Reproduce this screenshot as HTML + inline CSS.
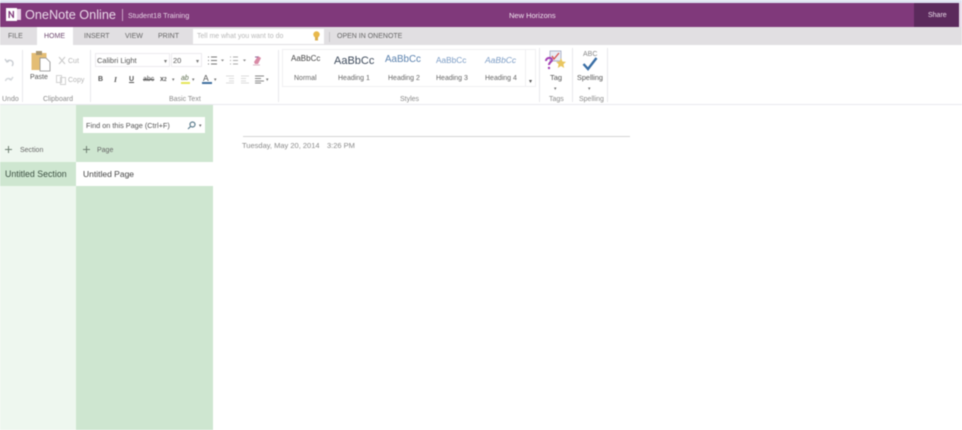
<!DOCTYPE html>
<html><head><meta charset="utf-8">
<style>
html,body{margin:0;padding:0;background:#fff}
#r{position:relative;width:962px;height:430px;overflow:hidden;background:#fff;font-family:"Liberation Sans",sans-serif;filter:blur(.45px)}
#r div,#r span.t{position:absolute;white-space:nowrap}
.t{position:absolute;white-space:nowrap;line-height:12px}
.g{font-size:7px;color:#8a8a8a}
.rb{font-size:7px;color:#666}
.sep{width:1px;background:#e9e9ec}
svg{position:absolute;overflow:visible}
</style></head><body>
<div id="r">
<div style="left:0;top:0;width:962px;height:3px;background:#dfe4f2"></div>
<div style="left:0;top:3px;width:962px;height:24px;background:#80397b"></div>
<div style="left:914px;top:3px;width:45px;height:25px;background:#5b2a5c"></div>
<div style="left:959px;top:3px;width:3px;height:24px;background:#e8dcea"></div>
<div style="left:0;top:27px;width:962px;height:18px;background:#e1dfe2"></div>
<div style="left:37px;top:27px;width:36px;height:18px;background:#fff"></div>

<svg style="left:6px;top:7px" width="16" height="16" viewBox="0 0 16 16"><rect x="0" y="1" width="11" height="13" fill="#fff"/><rect x="11" y="2" width="4" height="11" fill="#e7d3e6"/><path d="M2.5 11V4h1.2l3 4.600V4H8v7H6.900L3.800 6.300V11z" fill="#80397b"/></svg>
<span class="t" style="left:25px;top:7px;font-size:12.700px;line-height:17px;color:#e9d8e8">OneNote Online</span>
<div style="left:122px;top:9px;width:1px;height:12px;background:#c9a5c7"></div>
<span class="t" style="left:128px;top:10px;font-size:7.300px;color:#e6d3e5">Student18 Training</span>
<span class="t" style="left:509px;top:10px;font-size:7.500px;color:#f0e4ef">New Horizons</span>
<span class="t" style="left:928px;top:10px;font-size:7px;color:#eadcea">Share</span>

<span class="t" style="left:8px;top:31px;font-size:7px;color:#666">FILE</span>
<span class="t" style="left:44px;top:31px;font-size:7px;color:#6f4a70">HOME</span>
<span class="t" style="left:84px;top:31px;font-size:7px;color:#666">INSERT</span>
<span class="t" style="left:125px;top:31px;font-size:7px;color:#666">VIEW</span>
<span class="t" style="left:158px;top:31px;font-size:7px;color:#666">PRINT</span>
<div style="left:193px;top:29px;width:131px;height:15px;background:#fff"></div>
<span class="t" style="left:197px;top:31px;font-size:7px;color:#b8b8b8">Tell me what you want to do</span>
<svg style="left:312px;top:31px" width="9" height="11" viewBox="0 0 9 11"><circle cx="4.500" cy="3.500" r="3.200" fill="#e8b84a"/><rect x="3" y="6" width="3" height="3.500" fill="#d9ad4e"/></svg>
<div style="left:329px;top:32px;width:1px;height:10px;background:#c8c6c9"></div>
<span class="t" style="left:337px;top:31px;font-size:7px;color:#666">OPEN IN ONENOTE</span>

<div class="sep" style="left:22px;top:50px;height:52px"></div>
<div class="sep" style="left:90px;top:50px;height:52px"></div>
<div class="sep" style="left:278px;top:50px;height:52px"></div>
<div class="sep" style="left:539px;top:48px;height:54px"></div>
<div class="sep" style="left:572px;top:48px;height:54px"></div>
<div class="sep" style="left:607px;top:48px;height:54px"></div>
<div style="left:0;top:104px;width:962px;height:1px;background:#e8e8ee"></div>

<svg style="left:4px;top:56px" width="10" height="30" viewBox="0 0 10 30" fill="none" stroke="#c9cdd2" stroke-width="1.400"><path d="M1 3l2 3 2-1M3 5.500c2-2.500 6-1 6 2 0 1-.5 2-1 2.500"/><path d="M9 21l-2 3-2-1M7 23.500c-2-2-5-1-5.500 1.500" stroke="#d4d7db"/></svg>

<svg style="left:31px;top:50px" width="20" height="21" viewBox="0 0 20 21"><rect x="0.500" y="3" width="15" height="17" fill="#e4bd74"/><rect x="5" y="1" width="6" height="4" fill="#a8956f"/><path d="M9 8h6l4 4v9H9z" fill="#fff" stroke="#8d8d8d" stroke-width=".8"/></svg>
<span class="t" style="left:30px;top:72px;font-size:7px;color:#555">Paste</span>
<svg style="left:58px;top:56px" width="9" height="9" viewBox="0 0 9 9" fill="none" stroke="#c9c9c9"><path d="M1 1l6 7M7 1L1 8"/></svg>
<span class="t" style="left:68px;top:56px;font-size:7px;color:#b5b5b5">Cut</span>
<svg style="left:56px;top:75px" width="11" height="10" viewBox="0 0 11 10" fill="none" stroke="#d2d2d2"><rect x=".5" y=".5" width="5" height="7"/><rect x="4.500" y="2.500" width="5" height="7"/></svg>
<span class="t" style="left:68px;top:75px;font-size:7px;color:#b5b5b5">Copy</span>

<div style="left:95px;top:53px;width:75px;height:14px;border:1px solid #eceaee;box-sizing:border-box"></div>
<span class="t" style="left:97px;top:55px;font-size:7.500px;color:#555">Calibri Light</span>
<span class="t" style="left:164px;top:56px;font-size:6px;color:#777">▾</span>
<div style="left:171px;top:53px;width:31px;height:14px;border:1px solid #eceaee;box-sizing:border-box"></div>
<span class="t" style="left:173px;top:55px;font-size:7.500px;color:#555">20</span>
<span class="t" style="left:196px;top:56px;font-size:6px;color:#777">▾</span>

<svg style="left:207px;top:56px" width="52" height="10" viewBox="0 0 52 10"><g stroke="#777" fill="none"><path d="M1 1h1M1 4.500h1M1 8h1M4 1h6M4 4.500h6M4 8h6"/><path d="M23 1h1M23 4.500h1M23 8h1M26 1h5M26 4.500h5M26 8h5" stroke="#a9a9a9"/></g><path d="M14 3.500h3l-1.500 2z" fill="#888"/><path d="M36 3.500h3l-1.500 2z" fill="#888"/></svg>
<svg style="left:252px;top:55px" width="10" height="11" viewBox="0 0 10 11"><path d="M2 7l4-6 3 2-3 6H3z" fill="#d98aa6"/><path d="M1 10h7" stroke="#d9b7c5"/><path d="M3 2h3" stroke="#8a6a9a"/></svg>

<span class="t" style="left:98px;top:74px;font-size:7px;font-weight:bold;color:#555">B</span>
<span class="t" style="left:114px;top:74px;font-size:7.500px;font-style:italic;font-family:'Liberation Serif',serif;font-weight:bold;color:#555">I</span>
<span class="t" style="left:129px;top:74px;font-size:7px;font-weight:bold;text-decoration:underline;color:#555">U</span>
<span class="t" style="left:143px;top:74px;font-size:7px;text-decoration:line-through;color:#555">abc</span>
<span class="t" style="left:160px;top:74px;font-size:7px;font-weight:bold;color:#555">x<span style="font-size:5px">2</span></span>
<span class="t" style="left:172px;top:74px;font-size:5px;color:#777">▾</span>
<span class="t" style="left:181px;top:73px;font-size:7px;font-style:italic;color:#5a6a4a">ab</span>
<div style="left:181px;top:82px;width:9px;height:2px;background:#e6e65a"></div>
<span class="t" style="left:192px;top:74px;font-size:5px;color:#777">▾</span>
<span class="t" style="left:203px;top:72px;font-size:8.500px;color:#555">A</span>
<div style="left:202px;top:82px;width:10px;height:2px;background:#3f6f9f"></div>
<span class="t" style="left:214px;top:74px;font-size:5px;color:#777">▾</span>
<svg style="left:225px;top:75px" width="48" height="9" viewBox="0 0 48 9" fill="none" stroke="#dcdcdc"><path d="M1 1h8M4 3.500h5M4 6h5M1 8h8M16 1h8M16 3.500h5M16 6h5M16 8h8"/><path d="M30 1h9M30 3.500h6M30 6h9M30 8h6" stroke="#888"/></svg>
<span class="t" style="left:266px;top:74px;font-size:5px;color:#777">▾</span>

<div style="left:282px;top:49px;width:244px;height:38px;border:1px solid #f0eff2;box-sizing:border-box"></div>
<div style="left:525px;top:49px;width:11px;height:38px;border:1px solid #f0eff2;box-sizing:border-box"></div>
<span class="t" style="left:529px;top:76px;font-size:6px;color:#555">▾</span>
<span class="t" style="left:291px;top:53px;font-size:8px;color:#444">AaBbCc</span>
<span class="t" style="left:334px;top:54px;font-size:11px;line-height:14px;color:#3f4c5d">AaBbCc</span>
<span class="t" style="left:385px;top:53px;font-size:9.800px;line-height:14px;color:#5b82ae">AaBbCc</span>
<span class="t" style="left:436px;top:54px;font-size:8.300px;color:#7b9cc5">AaBbCc</span>
<span class="t" style="left:485px;top:54px;font-size:8.500px;font-style:italic;color:#7b9cc5">AaBbCc</span>
<span class="t rb" style="left:294px;top:73px">Normal</span>
<span class="t rb" style="left:338px;top:73px">Heading 1</span>
<span class="t rb" style="left:388px;top:73px">Heading 2</span>
<span class="t rb" style="left:436px;top:73px">Heading 3</span>
<span class="t rb" style="left:485px;top:73px">Heading 4</span>

<svg style="left:545px;top:50px" width="22" height="20" viewBox="0 0 22 20"><rect x="5" y="1" width="11" height="10" fill="#e8ecf4" stroke="#9fa7c0" stroke-width=".8"/><path d="M7 6l2 3 5-6" stroke="#d9534f" stroke-width="1.300" fill="none"/><path d="M1 11c0-4 6-4 6-1 0 2-3 2-3 5" stroke="#a43fb5" stroke-width="2" fill="none"/><circle cx="4" cy="18" r="1.200" fill="#a43fb5"/><path d="M16 8l1.500 3.500 3.500.4-2.600 2.400.8 3.700-3.200-2-3.200 2 .8-3.700-2.600-2.400 3.500-.4z" fill="#e9c65f"/></svg>
<span class="t" style="left:550px;top:72px;font-size:7.500px;color:#555">Tag</span>
<span class="t" style="left:554px;top:83px;font-size:5px;color:#777">▾</span>
<span class="t" style="left:583px;top:49px;font-size:7px;color:#888">ABC</span>
<svg style="left:582px;top:57px" width="16" height="14" viewBox="0 0 16 14"><path d="M1.500 7l4.500 5L14.500 1" stroke="#3a6ea5" stroke-width="2.400" fill="none"/></svg>
<span class="t" style="left:577px;top:72px;font-size:7.300px;color:#555">Spelling</span>
<span class="t" style="left:588px;top:83px;font-size:5px;color:#777">▾</span>

<span class="t g" style="left:2px;top:94px">Undo</span>
<span class="t g" style="left:43px;top:94px">Clipboard</span>
<span class="t g" style="left:169px;top:94px">Basic Text</span>
<span class="t g" style="left:400px;top:94px">Styles</span>
<span class="t g" style="left:549px;top:94px">Tags</span>
<span class="t g" style="left:579px;top:94px">Spelling</span>

<div style="left:0;top:105px;width:76px;height:325px;background:#eef7ef"></div>
<div style="left:76px;top:105px;width:137px;height:325px;background:#cee6d0"></div>
<div style="left:0;top:162px;width:76px;height:24px;background:#cee6d0"></div>
<div style="left:76px;top:162px;width:137px;height:24px;background:#fff"></div>
<div style="left:83px;top:117px;width:122px;height:16px;background:#fff"></div>
<span class="t" style="left:86px;top:120px;font-size:7.300px;color:#555">Find on this Page (Ctrl+F)</span>
<svg style="left:187px;top:121px" width="9" height="9" viewBox="0 0 9 9" fill="none" stroke="#5f7f8f" stroke-width="1.200"><circle cx="5.500" cy="3.500" r="2.500"/><path d="M3.500 5.500L1 8"/></svg>
<span class="t" style="left:199px;top:120px;font-size:5px;color:#666">▾</span>
<svg style="left:5px;top:146px" width="7" height="7" viewBox="0 0 7 7" stroke="#6f7f72" stroke-width="1"><path d="M3.500 0v7M0 3.500h7"/></svg>
<span class="t" style="left:20px;top:145px;font-size:7px;color:#666">Section</span>
<svg style="left:83px;top:146px" width="7" height="7" viewBox="0 0 7 7" stroke="#6f7f72" stroke-width="1"><path d="M3.500 0v7M0 3.500h7"/></svg>
<span class="t" style="left:97px;top:145px;font-size:7px;color:#666">Page</span>
<span class="t" style="left:5px;top:168px;font-size:8.800px;color:#3c5042">Untitled Section</span>
<span class="t" style="left:83px;top:168px;font-size:8.500px;color:#444">Untitled Page</span>

<div style="left:243px;top:136px;width:387px;height:1px;background:#d4d4d4"></div>
<span class="t" style="left:242px;top:140px;font-size:7.500px;color:#8b8b8b">Tuesday, May 20, 2014</span>
<span class="t" style="left:327px;top:140px;font-size:7.500px;color:#8b8b8b">3:26 PM</span>
</div>
</body></html>
